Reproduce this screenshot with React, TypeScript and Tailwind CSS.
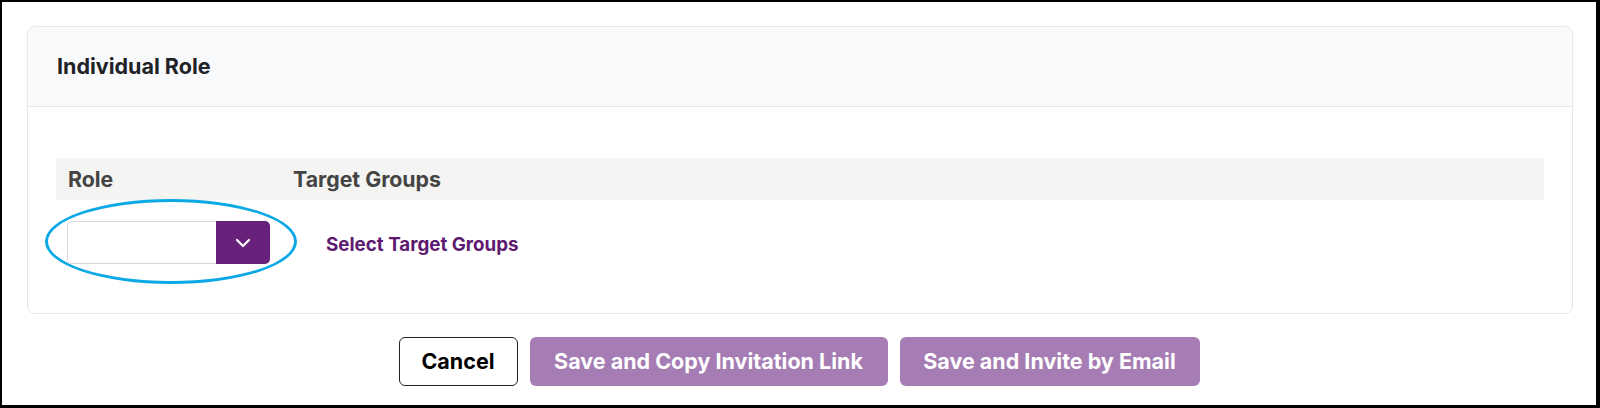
import { ChevronDown } from "lucide-react";

export default function App() {
  return (
    <div
      className="w-[1600px] h-[408px] bg-white border-l-2 border-t-2 border-r-4 border-b-[3px] border-black px-[25px] pt-[24px]"
      style={{ fontFamily: "Inter, 'Noto Sans', sans-serif" }}
    >
      {/* Card */}
      <div className="w-[1546px] h-[288px] rounded-lg border border-[#e8e8ea] overflow-hidden">
        <div className="h-[80px] bg-[#f8f9fa] border-b border-[#e8e8ea] flex items-center px-[29px]">
          <h2 className="text-[21.5px] font-bold text-[#1f2328]">Individual Role</h2>
        </div>

        <div className="px-[28px] pt-[51px]">
          <div className="h-[42px] bg-[#f4f4f3] flex items-center text-[21.3px] font-bold text-[#444]">
            <div className="w-[237px] pl-3 pt-[2px]">Role</div>
            <div className="pt-[2px]">Target Groups</div>
          </div>

          <div className="relative flex items-center mt-[21px]">
            <div className="ml-[11px] flex h-[43px] w-[203px]">
              <div className="flex-1 rounded-l-[5px] border border-r-0 border-[#d9d6de] bg-white" />
              <button className="w-[54px] rounded-r-[5px] bg-[#68217a] flex items-center justify-center text-white">
                <ChevronDown size={24} strokeWidth={2.25} />
              </button>
            </div>
            <a className="ml-[56px] pt-[5px] text-[18.8px] font-bold text-[#5d1a70]">Select Target Groups</a>

            {/* annotation ring */}
            <div className="absolute left-[-11px] top-[-22px] w-[252px] h-[85px] rounded-[50%] border-[3px] border-[#0aa9e6] pointer-events-none" />
          </div>
        </div>
      </div>

      {/* Actions */}
      <div className="flex justify-center gap-[12px] mt-[23px]">
        <button className="h-[49px] w-[119px] rounded-md border border-[#222] bg-white text-[21.5px] font-bold text-black">
          Cancel
        </button>
        <button className="h-[49px] w-[358px] rounded-md bg-[#a57cb3] text-[21.5px] font-bold text-white">
          Save and Copy Invitation Link
        </button>
        <button className="h-[49px] w-[300px] rounded-md bg-[#a57cb3] text-[21.5px] font-bold text-white">
          Save and Invite by Email
        </button>
      </div>
    </div>
  );
}
